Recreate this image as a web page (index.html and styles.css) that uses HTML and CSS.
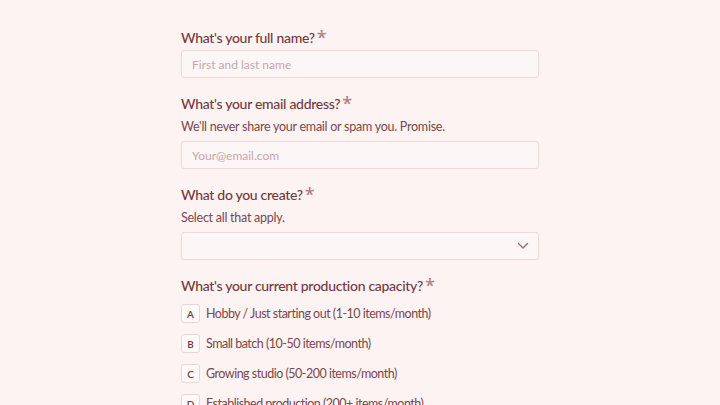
FILE: index.html
```html
<!DOCTYPE html>
<html lang="en">
<head>
    <meta charset="UTF-8">
    <title>Maker Application</title>
    <link rel="stylesheet" href="styles.css">
</head>
<body>
    <form class="form">
        <div class="field">
            <label class="field-label">What's your full name?<span class="req">*</span></label>
            <input class="text-input" type="text" placeholder="First and last name">
        </div>

        <div class="field">
            <label class="field-label">What's your email address?<span class="req">*</span></label>
            <div class="field-help">We'll never share your email or spam you. Promise.</div>
            <input class="text-input" type="email" placeholder="Your@email.com">
        </div>

        <div class="field">
            <label class="field-label">What do you create?<span class="req">*</span></label>
            <div class="field-help">Select all that apply.</div>
            <div class="select-box">
                <svg class="chevron" width="12" height="8" viewBox="0 0 12 8">
                    <path d="M1.5 1.5 L6 6 L10.5 1.5" fill="none" stroke="#9c6a70" stroke-width="1.4" stroke-linecap="round" stroke-linejoin="round"/>
                </svg>
            </div>
        </div>

        <div class="field">
            <label class="field-label">What's your current production capacity?<span class="req">*</span></label>
            <div class="choices">
                <div class="choice"><span class="choice-key">A</span>Hobby / Just starting out (1-10 items/month)</div>
                <div class="choice"><span class="choice-key">B</span>Small batch (10-50 items/month)</div>
                <div class="choice"><span class="choice-key">C</span>Growing studio (50-200 items/month)</div>
                <div class="choice"><span class="choice-key">D</span>Established production (200+ items/month)</div>
            </div>
        </div>
    </form>
</body>
</html>
```

FILE: styles.css
```css
* {
    box-sizing: border-box;
    font-family: Lato, "Noto Sans", sans-serif;
}

body {
    margin: 0;
    background-color: #fcf3f2;
    color: #763840;
    overflow: hidden;
}

.form {
    width: 358px;
    margin: 0 auto;
    padding-top: 28px;
}

.field {
    margin-bottom: 16px;
}

.field-label {
    display: block;
    font-size: 14px;
    line-height: 20px;
    font-weight: 500;
    letter-spacing: -0.3px;
    margin-bottom: 2px;
}

.req {
    display: inline-block;
    margin-left: 2px;
    font-family: "Noto Sans", sans-serif;
    font-size: 18px;
    line-height: 10px;
    color: #b07e84;
    vertical-align: -1px;
}

.field-help {
    font-size: 12.5px;
    line-height: 20px;
    letter-spacing: -0.25px;
    color: #7a474e;
    margin: 3px 0 4px;
}

.text-input,
.select-box {
    display: block;
    width: 100%;
    height: 28px;
    padding: 0 10px;
    border: 1px solid #f0d9d9;
    border-radius: 3px;
    background-color: #fdf6f6;
    font-size: 12px;
    color: #763840;
    outline: none;
}

.text-input::placeholder {
    color: #c9a5a9;
}

.select-box {
    display: flex;
    justify-content: flex-end;
    align-items: center;
    padding-right: 9px;
}

.choices {
    display: flex;
    flex-direction: column;
    gap: 11px;
    padding-top: 6px;
}

.choice {
    display: flex;
    align-items: center;
    height: 19px;
    font-size: 12.5px;
    letter-spacing: -0.5px;
    color: #7a474e;
}

.choice-key {
    width: 19px;
    height: 19px;
    margin-right: 6px;
    display: flex;
    align-items: center;
    justify-content: center;
    border: 1px solid #efd4d4;
    border-radius: 3px;
    background-color: #fffafa;
    font-size: 10px;
    font-weight: 600;
    letter-spacing: 0;
    color: #763840;
}
```
